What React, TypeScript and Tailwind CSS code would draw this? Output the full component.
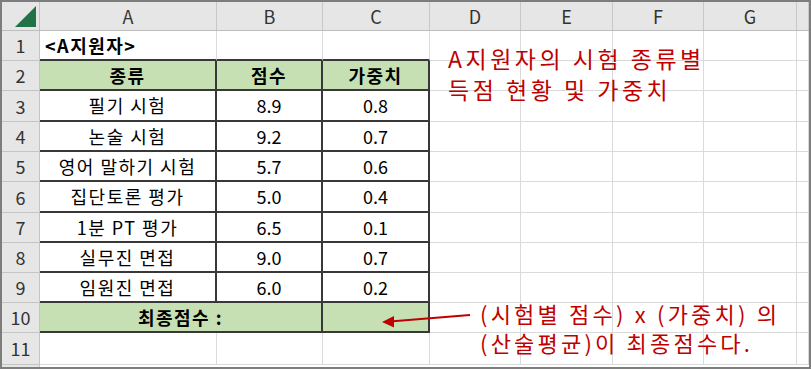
import React from "react";

const FONT = { fontFamily: '"Noto Sans CJK KR", "Noto Sans", sans-serif' };

type Cell = {
  text?: string;
  bold?: boolean;
  align?: "left" | "center";
  green?: boolean;
  span?: number;
  darkR?: boolean;
  darkB?: boolean;
  num?: boolean;
};

const letters = ["A", "B", "C", "D", "E", "F", "G", ""];

const tableRows: { label: string; cells: Cell[] }[] = [
  {
    label: "1",
    cells: [
      { text: "<A지원자>", bold: true, align: "left", darkB: true },
      { darkB: true },
      { darkB: true },
    ],
  },
  {
    label: "2",
    cells: [
      { text: "종류", bold: true, green: true, darkR: true, darkB: true },
      { text: "점수", bold: true, green: true, darkR: true, darkB: true },
      { text: "가중치", bold: true, green: true, darkR: true, darkB: true },
    ],
  },
  ...(
    [
      ["3", "필기 시험", "8.9", "0.8"],
      ["4", "논술 시험", "9.2", "0.7"],
      ["5", "영어 말하기 시험", "5.7", "0.6"],
      ["6", "집단토론 평가", "5.0", "0.4"],
      ["7", "1분 PT 평가", "6.5", "0.1"],
      ["8", "실무진 면접", "9.0", "0.7"],
      ["9", "임원진 면접", "6.0", "0.2"],
    ] as const
  ).map(([l, a, b, c]) => ({
    label: l,
    cells: [
      { text: a, darkR: true, darkB: true },
      { text: b, darkR: true, darkB: true, num: true },
      { text: c, darkR: true, darkB: true, num: true },
    ] as Cell[],
  })),
  {
    label: "10",
    cells: [
      { text: "최종점수 :", bold: true, green: true, span: 2, darkR: true, darkB: true },
      { green: true, darkR: true, darkB: true },
    ],
  },
  { label: "11", cells: [{}, {}, {}] },
];

const rowHeights = [30, 30, 31, 30, 30, 31, 30, 30, 30, 30, 32];

function DataCell({ c }: { c: Cell }) {
  const cls = [
    "flex items-center overflow-visible whitespace-nowrap text-[18px] text-black",
    c.num ? "tracking-normal" : "tracking-[1.5px]",
    c.align === "left" ? "justify-start pl-[5px]" : "justify-center",
    c.green ? "bg-[#c6e0b4]" : "bg-white",
    c.darkR ? "border-r-2 border-r-[#383838]" : "border-r border-r-[#dadada]",
    c.darkB ? "border-b-2 border-b-[#383838]" : "border-b border-b-[#dadada]",
    c.bold ? "font-bold" : "font-normal",
    c.span === 2 ? "col-span-2" : "",
  ].join(" ");
  return <div className={cls}>{c.text}</div>;
}

function EmptyCell() {
  return <div className="border-r border-b border-[#dadada] bg-white" />;
}

export default function App() {
  return (
    <div className="relative w-[811px] h-[374px] bg-white" style={FONT}>
      <div className="w-[811px] h-[369px] border-2 border-[#7d7d7d] overflow-hidden flex flex-col bg-white">
        <div className="grid grid-cols-[38px_177px_106px_107px_91px_92px_91px_93px_1fr] h-[29px] bg-[#e6e6e6] border-b border-[#bdbdbd]">
          <div className="relative border-r border-[#c4c4c4]">
            <svg className="absolute left-[13px] top-[4px]" width="21" height="21" viewBox="0 0 21 21">
              <polygon points="0,21 21,21 21,0" fill="#217346" />
            </svg>
          </div>
          {letters.map((l, i) => (
            <div
              key={i}
              className="flex items-center justify-center border-r border-[#c8c8c8] text-[18px] text-[#333]"
            >
              {l}
            </div>
          ))}
        </div>
        {tableRows.map((r, ri) => (
          <div
            key={ri}
            className="grid grid-cols-[38px_177px_106px_107px_91px_92px_91px_93px_1fr]"
            style={{ height: rowHeights[ri] }}
          >
            <div className="flex items-center justify-center bg-[#e6e6e6] border-r border-b border-[#c4c4c4] text-[18px] text-[#333]">
              {r.label}
            </div>
            {r.cells.map((c, ci) => (
              <DataCell key={ci} c={c} />
            ))}
            <EmptyCell />
            <EmptyCell />
            <EmptyCell />
            <EmptyCell />
            <EmptyCell />
          </div>
        ))}
        <div className="flex-1 grid grid-cols-[38px_1fr]">
          <div className="bg-[#e6e6e6] border-r border-[#c4c4c4]" />
          <div className="bg-white" />
        </div>
      </div>

      <div className="absolute left-[448px] top-[43px] text-[23px] leading-[31px] tracking-[3.5px] text-[#c00000] whitespace-nowrap">
        <div>A지원자의 시험 종류별</div>
        <div>득점 현황 및 가중치</div>
      </div>

      <div className="absolute left-[480px] top-[299px] text-[22px] leading-[29px] tracking-[3.2px] text-[#c00000] whitespace-nowrap">
        <div>(시험별 점수) x (가중치) 의</div>
        <div>(산술평균)이 최종점수다.</div>
      </div>

      <svg className="absolute left-[378px] top-[310px]" width="96" height="20" viewBox="0 0 96 20">
        <line x1="92" y1="5" x2="12" y2="11.5" stroke="#c00000" strokeWidth="2" />
        <polygon points="4,12 16,6 16,17.5" fill="#c00000" />
      </svg>
    </div>
  );
}
